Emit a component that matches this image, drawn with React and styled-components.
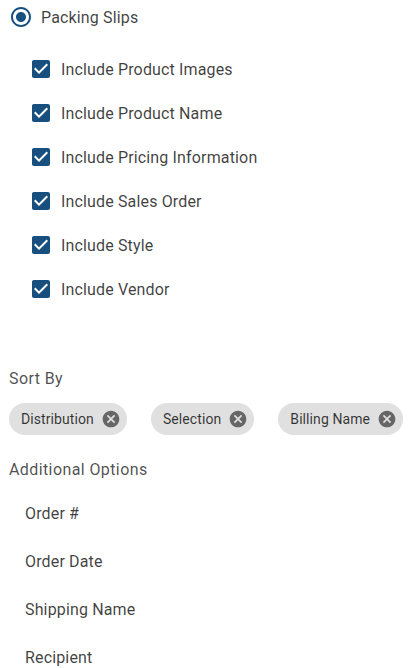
import React from "react";
import styled, { createGlobalStyle } from "styled-components";

const Global = createGlobalStyle`
  html, body { margin: 0; padding: 0; background: #fff; }
  body { font-family: Roboto, "Noto Sans", sans-serif; }
`;

const Page = styled.div`
  width: 416px;
  display: flex;
  flex-direction: column;
`;

const RadioRow = styled.label`
  display: flex;
  align-items: center;
  height: 34px;
  padding-left: 9px;
  gap: 8px;
  font-size: 16px;
  color: rgba(0, 0, 0, 0.76);
  letter-spacing: 0.15px;
`;

const CheckList = styled.div`
  display: flex;
  flex-direction: column;
  margin-top: 13px;
  padding-left: 29px;
`;

const CheckRow = styled.label`
  display: flex;
  align-items: center;
  height: 44px;
  gap: 8px;
  font-size: 16px;
  color: rgba(0, 0, 0, 0.76);
  letter-spacing: 0.15px;
`;

const SectionTitle = styled.div`
  font-size: 16px;
  line-height: 24px;
  padding-left: 9px;
  color: rgba(0, 0, 0, 0.7);
  letter-spacing: 0.4px;
  margin-top: ${(p) => p.$top}px;
`;

const ChipRow = styled.div`
  display: flex;
  gap: 24px;
  padding-left: 9px;
  margin-top: 12px;
`;

const Chip = styled.div`
  display: inline-flex;
  align-items: center;
  height: 32px;
  border-radius: 16px;
  background: #e0e0e0;
  font-size: 14px;
  color: rgba(0, 0, 0, 0.78);
  letter-spacing: 0.09px;
`;

const ChipLabel = styled.span`
  padding: 0 12px;
`;

const ChipDelete = styled.svg`
  width: 20px;
  height: 20px;
  margin: 0 6px 0 -5px;
  fill: #666;
`;

const OptionList = styled.div`
  display: flex;
  flex-direction: column;
  margin-top: 7px;
`;

const OptionRow = styled.div`
  height: 48px;
  display: flex;
  align-items: center;
  padding-left: 25px;
  font-size: 16px;
  color: rgba(0, 0, 0, 0.76);
  letter-spacing: 0.15px;
`;

const Icon = styled.svg`
  width: 24px;
  height: 24px;
  fill: #17507f;
  flex: none;
`;

const RadioIcon = () => (
  <Icon viewBox="0 0 24 24">
    <path d="M12 7c-2.76 0-5 2.24-5 5s2.24 5 5 5 5-2.24 5-5-2.24-5-5-5zm0-5C6.48 2 2 6.48 2 12s4.48 10 10 10 10-4.48 10-10S17.52 2 12 2zm0 18c-4.42 0-8-3.58-8-8s3.58-8 8-8 8 3.58 8 8-3.58 8-8 8z" />
  </Icon>
);

const CheckIcon = () => (
  <Icon viewBox="0 0 24 24">
    <path d="M19 3H5c-1.11 0-2 .9-2 2v14c0 1.1.89 2 2 2h14c1.11 0 2-.9 2-2V5c0-1.1-.89-2-2-2zm-9 14l-5-5 1.41-1.41L10 14.17l7.59-7.59L19 8l-9 9z" />
  </Icon>
);

const checks = [
  "Include Product Images",
  "Include Product Name",
  "Include Pricing Information",
  "Include Sales Order",
  "Include Style",
  "Include Vendor",
];

const chips = ["Distribution", "Selection", "Billing Name"];
const options = ["Order #", "Order Date", "Shipping Name", "Recipient"];

export default function App() {
  return (
    <>
      <Global />
      <Page>
        <RadioRow>
          <RadioIcon />
          Packing Slips
        </RadioRow>
        <CheckList>
          {checks.map((c) => (
            <CheckRow key={c}>
              <CheckIcon />
              {c}
            </CheckRow>
          ))}
        </CheckList>
        <SectionTitle $top={56}>Sort By</SectionTitle>
        <ChipRow>
          {chips.map((c) => (
            <Chip key={c}>
              <ChipLabel>{c}</ChipLabel>
              <ChipDelete viewBox="0 0 24 24">
                <path d="M12 2C6.47 2 2 6.47 2 12s4.47 10 10 10 10-4.47 10-10S17.53 2 12 2zm5 13.59L15.59 17 12 13.41 8.41 17 7 15.59 10.59 12 7 8.41 8.41 7 12 10.59 15.59 7 17 8.41 13.41 12 17 15.59z" />
              </ChipDelete>
            </Chip>
          ))}
        </ChipRow>
        <SectionTitle $top={23}>Additional Options</SectionTitle>
        <OptionList>
          {options.map((o) => (
            <OptionRow key={o}>{o}</OptionRow>
          ))}
        </OptionList>
      </Page>
    </>
  );
}
